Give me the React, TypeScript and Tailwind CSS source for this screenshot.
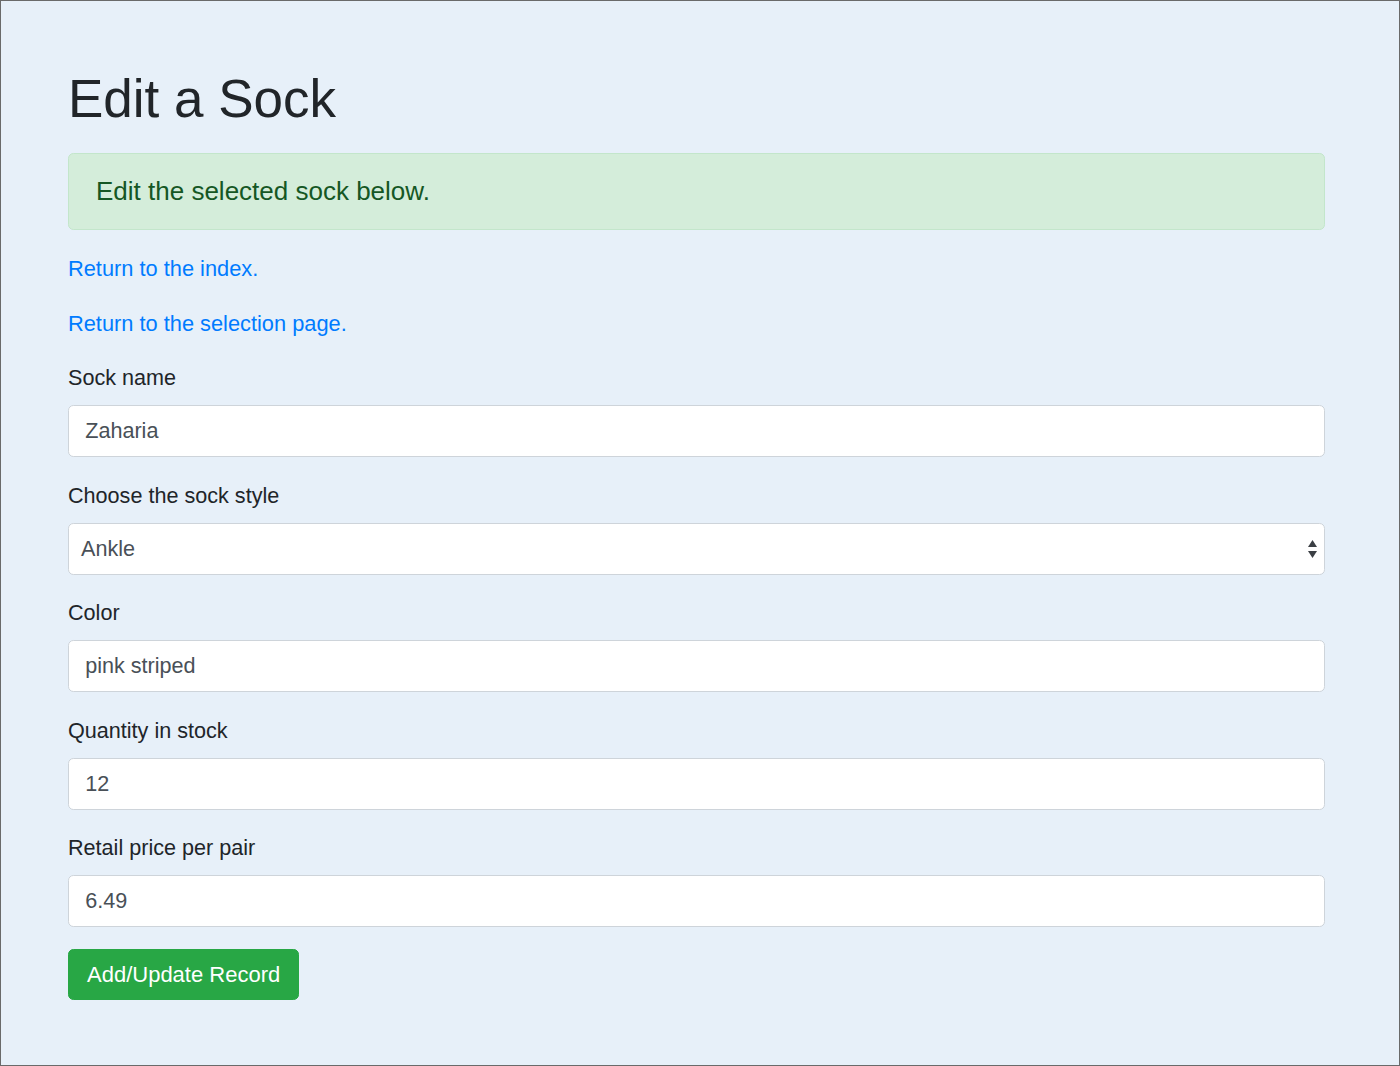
import React from "react";

const fields = [
  { label: "Sock name", value: "Zaharia" },
  { label: "Choose the sock style", value: "Ankle", select: true },
  { label: "Color", value: "pink striped" },
  { label: "Quantity in stock", value: "12" },
  { label: "Retail price per pair", value: "6.49" },
];

function SelectArrows() {
  return (
    <svg width="11" height="22" viewBox="0 0 11 22" className="absolute right-[6px] top-1/2 -translate-y-1/2">
      <path d="M5.5 2 L10 9 L1 9 Z" fill="#3b3f44" />
      <path d="M1 13 L10 13 L5.5 20 Z" fill="#3b3f44" />
    </svg>
  );
}

export default function App() {
  return (
    <div
      className="h-[1066px] w-[1400px] border border-[#6a6a6a] bg-[#e7f0f9] text-[#212529]"
      style={{ fontFamily: '"Liberation Sans", Arial, sans-serif' }}
    >
      <div className="pl-[67px] pr-[74px] pt-[66px]">

        {/* HEADER */}
        <h1 className="text-[53px] leading-[64.8px] mb-[21px]">Edit a Sock</h1>

        <div className="bg-[#d4edda] border border-[#c3e6cb] rounded-[5.4px] px-[27px] py-[17.5px] mb-[23px]">
          <p className="text-[26px] leading-[40px] text-[#155724]">Edit the selected sock below.</p>
        </div>

        {/* LINKS */}
        <p className="text-[21.8px] leading-[32.4px] mb-[22.4px]">
          <a className="text-[#007bff]" href="#">Return to the index.</a>
        </p>
        <p className="text-[21.8px] leading-[32.4px] mb-[21.4px]">
          <a className="text-[#007bff]" href="#">Return to the selection page.</a>
        </p>

        {/* FORM */}
        <form className="flex flex-col gap-[21.5px]" onSubmit={(e) => e.preventDefault()}>
          {fields.map((f, i) => (
            <div key={i}>
              <label className="block text-[21.6px] leading-[33px] mb-[11px]">{f.label}</label>
              {f.select ? (
                <div className="relative h-[52px] bg-white border border-[#ced4da] rounded-[5.4px] flex items-center pl-[12px]">
                  <span className="text-[21.6px] text-[#495057]">{f.value}</span>
                  <SelectArrows />
                </div>
              ) : (
                <input
                  className="block w-full h-[52px] bg-white border border-[#ced4da] rounded-[5.4px] px-[16.2px] text-[21.6px] text-[#495057] outline-none"
                  defaultValue={f.value}
                />
              )}
            </div>
          ))}

          <div>
            <button className="h-[51px] px-[18px] bg-[#28a745] border border-[#28a745] rounded-[5.4px] text-white text-[22px]">
              Add/Update Record
            </button>
          </div>
        </form>

      </div>
    </div>
  );
}
